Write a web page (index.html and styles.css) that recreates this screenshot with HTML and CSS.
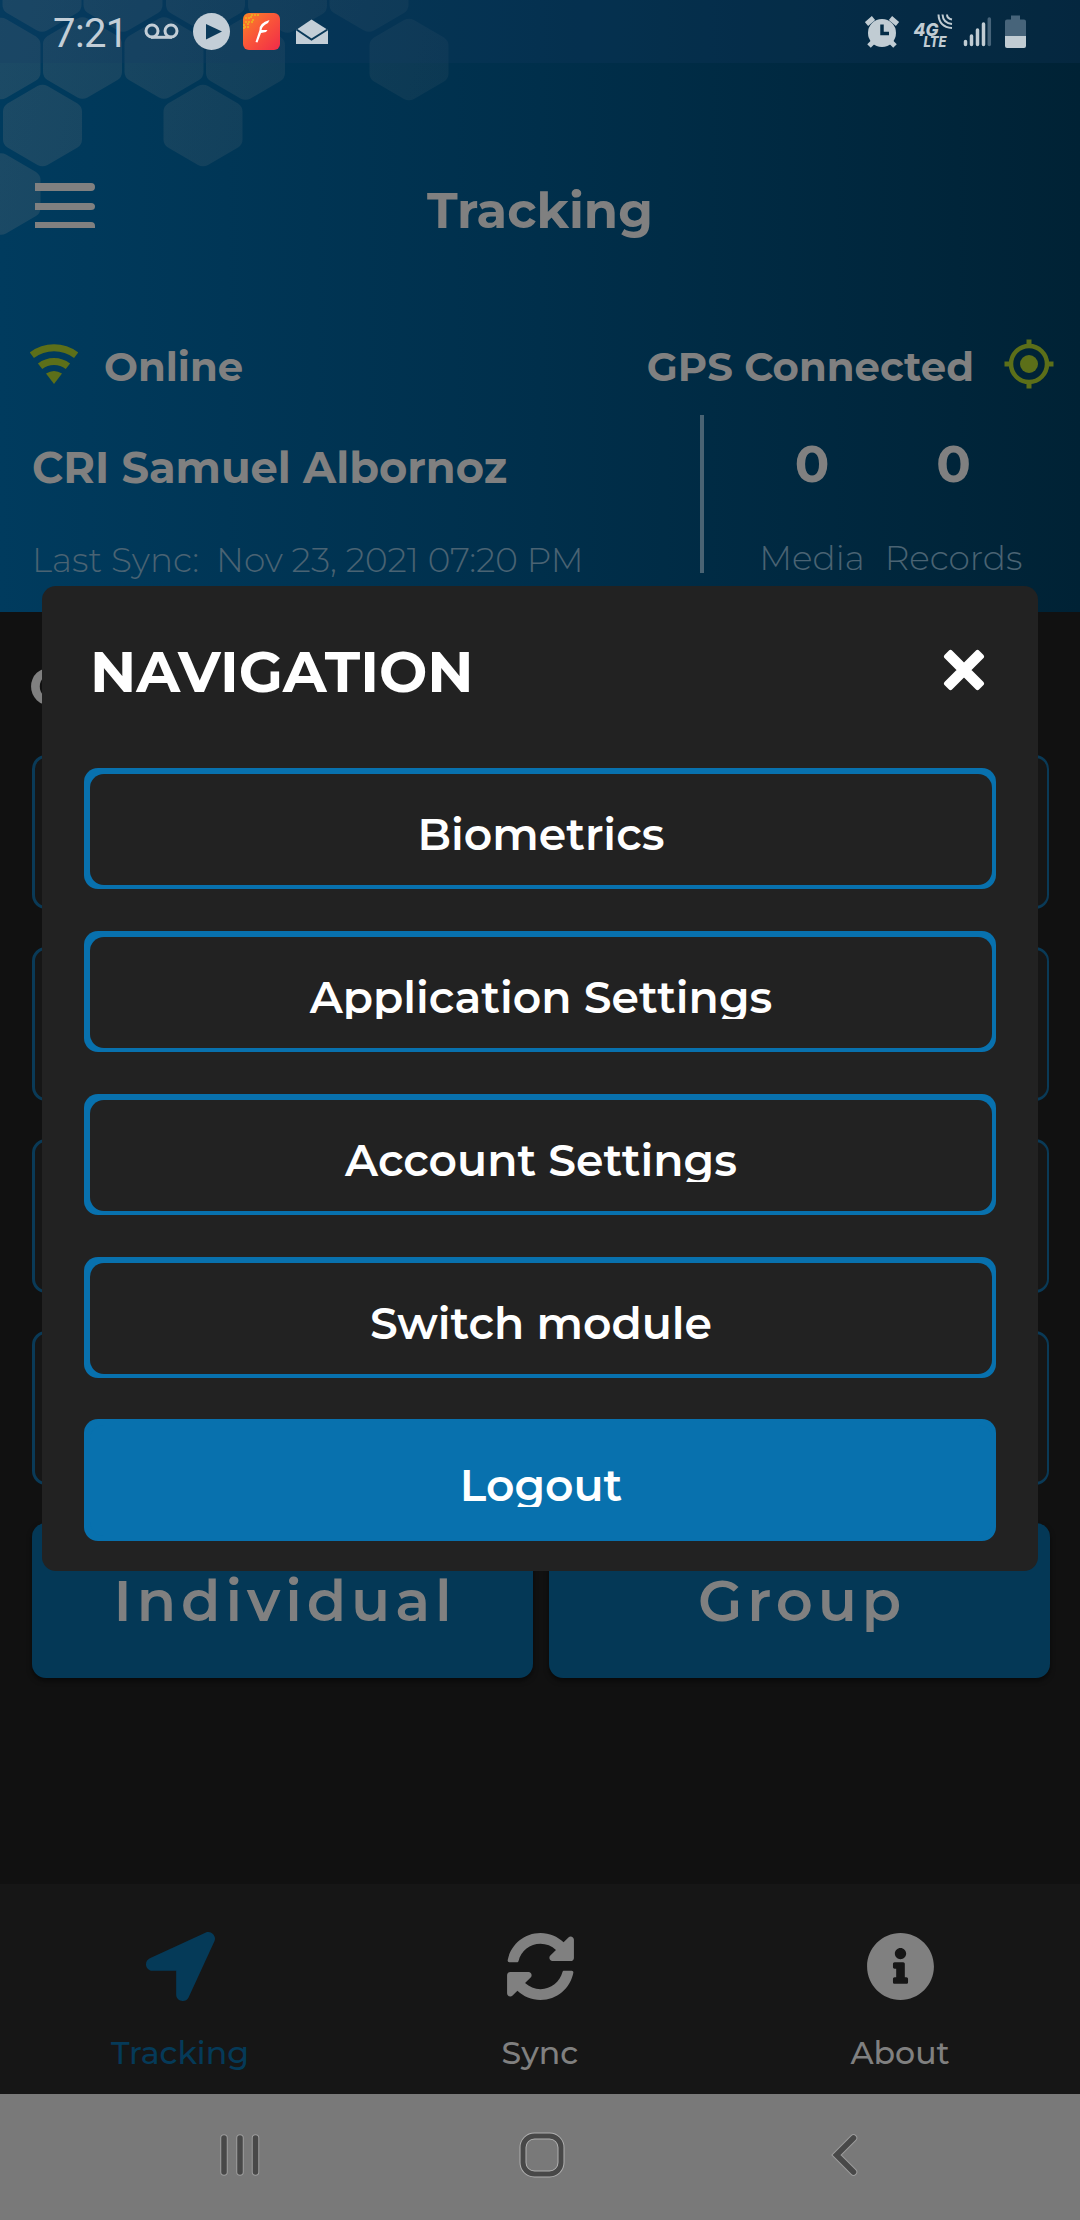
FILE: index.html
```html
<!DOCTYPE html>
<html lang="en">
<head>
<meta charset="utf-8">
<title>Tracking</title>
<link rel="stylesheet" href="styles.css">
</head>
<body>
<div class="phone">
  <header class="header">
    <svg class="hexes" width="460" height="240" viewBox="0 0 460 240">
      <defs>
        <linearGradient id="fade" gradientUnits="userSpaceOnUse" x1="0" y1="40" x2="440" y2="140">
          <stop offset="0" stop-color="#808080" stop-opacity=".22"/>
          <stop offset=".5" stop-color="#808080" stop-opacity=".15"/>
          <stop offset="1" stop-color="#808080" stop-opacity=".09"/>
        </linearGradient>
        <path id="hex" d="M-5 -39.500Q0 -42 5 -39.500L35 -22Q39.500 -19 39.500 -14V14Q39.500 19 35 22L5 39.500Q0 42 -5 39.500L-35 22Q-39.500 19 -39.500 14V-14Q-39.500 -19 -35 -22Z"/>
        <clipPath id="comb">
          <use href="#hex" x="42" y="-9"/><use href="#hex" x="123" y="-9"/><use href="#hex" x="205.500" y="-9"/><use href="#hex" x="287.500" y="-8"/><use href="#hex" x="369" y="-9"/>
          <use href="#hex" x="1" y="58.500"/><use href="#hex" x="82.500" y="58"/><use href="#hex" x="164" y="58"/><use href="#hex" x="245.500" y="59"/><use href="#hex" x="409" y="59.500"/>
          <use href="#hex" x="42.500" y="125.500"/><use href="#hex" x="203" y="125.500"/><use href="#hex" x="1" y="194"/>
        </clipPath>
      </defs>
      <rect width="460" height="240" fill="url(#fade)" clip-path="url(#comb)"/>
    </svg>

    <div class="status">
      <span class="clock">7:21</span>
      <svg class="left-icons" width="190" height="63" viewBox="0 0 190 63">
        <g fill="none" stroke="#c3ced7" stroke-width="3"><circle cx="12" cy="31" r="6"/><circle cx="31" cy="31" r="6"/><path d="M11 37.300H32"/></g>
        <circle cx="71.500" cy="31.500" r="18.500" fill="#c3ced7"/><path d="M66 24L82 31.500L66 39.500Z" fill="#0b3a5a"/>
        <defs><linearGradient id="app" x1="0" y1="0" x2="1" y2="1"><stop offset="0" stop-color="#fb8425"/><stop offset=".5" stop-color="#f9533a"/><stop offset="1" stop-color="#f02b49"/></linearGradient></defs>
        <rect x="103" y="13" width="37" height="37" rx="6" fill="url(#app)"/>
        <path d="M105 18h6v-3h8M105 22h5M104 27h4v-5h5v-4M104 29v-5" fill="none" stroke="#f0a422" stroke-width="2" stroke-dasharray="2 1"/>
        <path d="M129.500 20Q119 23 119.500 30L115.500 42L117.500 42.500L121 33L126 32L127.500 30L121.500 30Q122 26 128 23Z" fill="#fff"/>
        <path d="M156 30L171.500 19.500L188 30V44H156Z" fill="#c3ced7"/><path d="M156.500 29.500L171.500 39.500L187.500 29.500" fill="none" stroke="#0b3a5a" stroke-width="2"/>
      </svg>
      <svg class="right-icons" width="166" height="63" viewBox="865 0 166 63">
        <g fill="none" stroke="#c1ccd3" stroke-width="5"><path d="M866.500 24L873.500 18M890.500 18L897.500 24M874 41L869 46M890 41L895 46"/></g>
        <circle cx="882" cy="33" r="14" fill="#c1ccd3"/><path d="M882 24.500V33.500H889" fill="none" stroke="#042c46" stroke-width="3.500"/>
        <text class="net"><tspan x="913.500" y="36" font-size="18" textLength="25" lengthAdjust="spacingAndGlyphs">4G</tspan><tspan x="923.500" y="47" font-size="14" textLength="23" lengthAdjust="spacingAndGlyphs">LTE</tspan></text>
        <g fill="none" stroke="#c1ccd3" stroke-width="2"><path d="M938.500 14.500Q939 27 952 28M942.500 14.500Q943 23 952 24M947 14.500Q947 18.500 952 19.500"/></g>
        <g stroke="#c1ccd3" stroke-width="3.500" stroke-linecap="round"><path d="M965.500 41.500V44.500M971.500 36V44.500M977.500 30V44.500M983.500 24V44.500"/><path d="M989.300 19V44.500" stroke="#47647a"/></g>
        <path d="M1011 15.500h9v4h4q2 0 2 2V36h-21V21.500q0-2 2-2h4Z" fill="#47647a"/><path d="M1005 36h21v10q0 2-2 2h-17q-2 0-2-2Z" fill="#c1ccd3"/>
      </svg>
    </div>

    <div class="title-row">
      <svg class="menu" width="60" height="46" viewBox="0 0 60 46"><path d="M0 0H56Q60 0 60 4T56 8H0ZM0 20H56Q60 20 60 23.500T56 27H0ZM0 39H56Q60 39 60 43V45H0Z" fill="#808080"/></svg>
      <h1>Tracking</h1>
    </div>

    <div class="connection">
      <div class="conn">
        <svg width="48" height="42" viewBox="0 0 48 42"><path d="M24 41L16 30.500Q24 25.500 32 30.500Z" fill="#5c6f19"/><g fill="none" stroke="#5c6f19" stroke-width="7"><path d="M10.100 23.200A22.500 22.500 0 0 1 37.900 23.200"/><path d="M1.800 12.200A36.500 36.500 0 0 1 46.200 12.200"/></g></svg>
        <span class="online">Online</span>
      </div>
      <div class="conn">
        <span class="gps">GPS Connected</span>
        <svg width="50" height="50" viewBox="0 0 50 50"><circle cx="25" cy="25" r="9" fill="#5c6f19"/><g fill="none" stroke="#5c6f19"><circle cx="25" cy="25" r="18" stroke-width="4.500"/><path d="M25 .5V7M25 43V49.500M.5 25H7M43 25H49.500" stroke-width="5"/></g></svg>
      </div>
    </div>

    <div class="profile">
      <div class="who">
        <div class="name">CRI Samuel Albornoz</div>
        <div class="sync"><span class="sync-label">Last Sync:</span><span>Nov 23, 2021 07:20 PM</span></div>
      </div>
      <div class="divider"></div>
      <div class="stat media"><b>0</b><span>Media</span></div>
      <div class="stat records"><b>0</b><span>Records</span></div>
    </div>
  </header>

  <main class="content">
    <h2>C</h2>
    <div class="options">
      <div class="option"></div>
      <div class="option"></div>
      <div class="option"></div>
      <div class="option"></div>
      <div class="pair"><div class="solid">Individual</div><div class="solid">Group</div></div>
    </div>
  </main>

  <nav class="tabs">
    <div class="tab active"><svg width="69" height="69" viewBox="0 0 512 512"><path fill="currentColor" d="M444.520 3.520L28.740 195.420c-47.970 22.390-31.980 92.750 19.190 92.750h175.910v175.910c0 51.170 70.360 67.170 92.750 19.190l191.900-415.780c15.990-38.390-25.590-79.970-63.970-63.950z"/></svg><span>Tracking</span></div>
    <div class="tab"><svg width="69" height="69" viewBox="0 0 512 512"><path fill="currentColor" d="M370.720 133.280C339.458 104.008 298.888 87.962 255.848 88c-77.458.068-144.328 53.178-162.791 126.850-1.344 5.363-6.122 9.150-11.651 9.150H24.103c-7.498 0-13.194-6.807-11.807-14.176C33.933 94.924 134.813 8 256 8c66.448 0 126.791 26.136 171.315 68.685L463.030 40.970C478.149 25.851 504 36.559 504 57.941V192c0 13.255-10.745 24-24 24H345.941c-21.382 0-32.090-25.851-16.971-40.971l41.750-41.749zM32 296h134.059c21.382 0 32.090 25.851 16.971 40.971l-41.750 41.750c31.262 29.273 71.835 45.319 114.876 45.280 77.418-.07 144.315-53.144 162.787-126.849 1.344-5.363 6.122-9.150 11.651-9.150h57.304c7.498 0 13.194 6.807 11.807 14.176C478.067 417.076 377.187 504 256 504c-66.448 0-126.791-26.136-171.315-68.685L48.970 471.030C33.851 486.149 8 475.441 8 454.059V320c0-13.255 10.745-24 24-24z"/></svg><span>Sync</span></div>
    <div class="tab"><svg width="69" height="69" viewBox="0 0 512 512"><path fill="currentColor" d="M256 8C119.043 8 8 119.083 8 256c0 136.997 111.043 248 248 248s248-111.003 248-248C504 119.083 392.957 8 256 8zm0 110c23.196 0 42 18.804 42 42s-18.804 42-42 42-42-18.804-42-42 18.804-42 42-42zm56 254c0 6.627-5.373 12-12 12h-88c-6.627 0-12-5.373-12-12v-24c0-6.627 5.373-12 12-12h12v-64h-12c-6.627 0-12-5.373-12-12v-24c0-6.627 5.373-12 12-12h64c6.627 0 12 5.373 12 12v100h12c6.627 0 12 5.373 12 12v24z"/></svg><span>About</span></div>
  </nav>

  <div class="system">
    <svg width="60" height="60" viewBox="0 0 60 60"><g stroke-linecap="round" fill="none"><path d="M14 13V47M30 13V47M45.500 13V47" stroke="#9c9c9c" stroke-width="7.500"/><path d="M14 13V47M30 13V47M45.500 13V47" stroke="#484848" stroke-width="5.500"/></g></svg>
    <svg width="60" height="60" viewBox="0 0 60 60"><g fill="none"><rect x="11" y="11" width="38" height="38" rx="11.500" stroke="#b0b0b0" stroke-width="7"/><rect x="11" y="11" width="38" height="38" rx="11.500" stroke="#484848" stroke-width="5"/></g></svg>
    <svg width="60" height="60" viewBox="0 0 60 60"><g fill="none" stroke-linecap="round"><path d="M39.500 13L22.500 30L39.500 47" stroke="#9c9c9c" stroke-width="7.500"/><path d="M39.500 13L22.500 30L39.500 47" stroke="#484848" stroke-width="5.500"/></g></svg>
  </div>

  <section class="modal">
    <div class="modal-head">
      <h3>NAVIGATION</h3>
      <svg width="42" height="42" viewBox="0 0 42 42"><path d="M3.500 7.500L7.500 3.500L21 17L34.500 3.500L38.500 7.500L25 21L38.500 34.500L34.500 38.500L21 25L7.500 38.500L3.500 34.500L17 21Z" fill="#fff" stroke="#fff" stroke-width="5" stroke-linejoin="round"/></svg>
    </div>
    <div class="modal-list">
      <div class="btn"><div class="face"><span>Biometrics</span></div></div>
      <div class="btn"><div class="face"><span>Application Settings</span></div></div>
      <div class="btn"><div class="face"><span>Account Settings</span></div></div>
      <div class="btn"><div class="face"><span>Switch module</span></div></div>
      <div class="btn logout"><div class="face"><span>Logout</span></div></div>
    </div>
  </section>
</div>
</body>
</html>
```
FILE: styles.css
```css
* { box-sizing: border-box; margin: 0; }
body { background: #111; font-family: Montserrat, Inter, sans-serif; color: #808080; }
svg { display: block; flex: none; }
.phone { position: relative; width: 1080px; height: 2220px; display: flex; flex-direction: column; overflow: hidden; white-space: nowrap; }

/* Header */
.header { position: relative; height: 612px; background: linear-gradient(90deg, #003b5e, #002f4b 50%, #002235); }
.hexes { position: absolute; left: 0; top: 0; }
.status { position: relative; height: 63px; display: flex; align-items: center; padding: 0 49px 0 53px; background: rgba(25, 58, 100, .22); }
.clock { font: 400 40px/40px Roboto, sans-serif; width: 87px; padding-top: 4px; color: #c3ced7; letter-spacing: -.6px; }
.right-icons { margin-left: auto; }
.net { font-family: Inter, sans-serif; font-weight: 800; font-style: italic; fill: #c1ccd3; }
.title-row { position: relative; margin-top: 85px; height: 125px; display: grid; grid-template-columns: 60px 1fr 60px; padding: 0 35px; }
.menu { margin-top: 35px; }
h1 { font-size: 49.600px; line-height: 125px; font-weight: 700; text-align: center; }
.connection { margin-top: 57px; height: 74px; padding: 0 26px 0 30px; display: flex; justify-content: space-between; }
.conn { display: flex; }
.conn svg { margin-top: 13px; }
.conn span { font-size: 40.200px; font-weight: 700; line-height: 74px; }
.conn .online { margin-left: 26px; }
.conn .gps { margin-right: 30px; }
.conn .gps + svg { margin-top: 9px; }
.profile { margin-top: 11px; display: flex; height: 158px; padding-left: 32px; }
.who { width: 668px; padding-top: 23px; }
.name { font-size: 43.200px; font-weight: 700; line-height: 60px; }
.sync { margin-top: 42px; font-size: 34.300px; line-height: 40px; font-weight: 300; color: #4a6373; display: flex; }
.sync-label { width: 184px; }
.divider { width: 4px; background: #4a6373; }
.stat { display: flex; flex-direction: column; align-items: center; padding-top: 19px; }
.stat b { font-size: 51px; line-height: 60px; font-weight: 700; }
.stat span { margin-top: 44px; font-size: 34.300px; line-height: 40px; font-weight: 300; color: #4a6373; }
.media { margin-left: 54px; width: 108px; }
.records { margin-left: 18px; width: 139px; }

/* Page content */
.content { flex: 1; padding: 49px 30px 0 32px; }
h2 { font-size: 53px; line-height: 50px; font-weight: 700; margin-left: -3px; }
.options { margin-top: 44px; display: grid; grid-template-rows: repeat(4, 154px) 155px; gap: 38px; }
.option { background: #161616; border: 3px solid #0a3a57; border-right-width: 2px; border-radius: 14px; margin-right: 1px; }
.pair { display: grid; grid-template-columns: 501px 501px; gap: 16px; }
.solid { display: flex; justify-content: center; font-size: 57.500px; font-weight: 600; line-height: 155px; letter-spacing: 4.900px; text-indent: 5px; background: #043856; border-radius: 14px; box-shadow: 0 3px 5px rgba(0, 0, 0, .5); }

/* Tab bar */
.tabs { height: 210px; background: #161616; display: grid; grid-template-columns: repeat(3, 1fr); }
.tab { display: flex; flex-direction: column; align-items: center; padding-top: 48px; gap: 32px; font-size: 31.600px; line-height: 40px; font-weight: 500; }
.active { color: #053a58; }
.system { height: 126px; background: #797979; display: flex; justify-content: center; gap: 242px; padding: 31px 0 0 4px; }

/* Navigation dialog */
.modal { position: absolute; left: 42px; top: 586px; width: 996px; height: 985px; border-radius: 14px; background: #222; color: #fff; padding: 0 42px; }
.modal-head { display: flex; justify-content: space-between; height: 182px; padding: 56px 11px 0 6px; }
.modal-head svg { margin-top: 7px; }
h3 { font-size: 57.300px; line-height: 60px; font-weight: 700; }
.modal-list { display: grid; grid-auto-rows: 121px; gap: 42px; }
.btn { border-radius: 14px; background: #0871ae; padding: 6px 4px 4px 6px; font-size: 44.160px; font-weight: 600; text-align: center; }
.face { height: 111px; border-radius: 14px; background: #222; }
.logout { margin-top: -1px; }
.logout .face { background: #0871ae; }
/* The label box ends just under the baseline and cuts the descenders */
.face span { display: block; height: 82px; line-height: 121px; overflow: hidden; }
```
